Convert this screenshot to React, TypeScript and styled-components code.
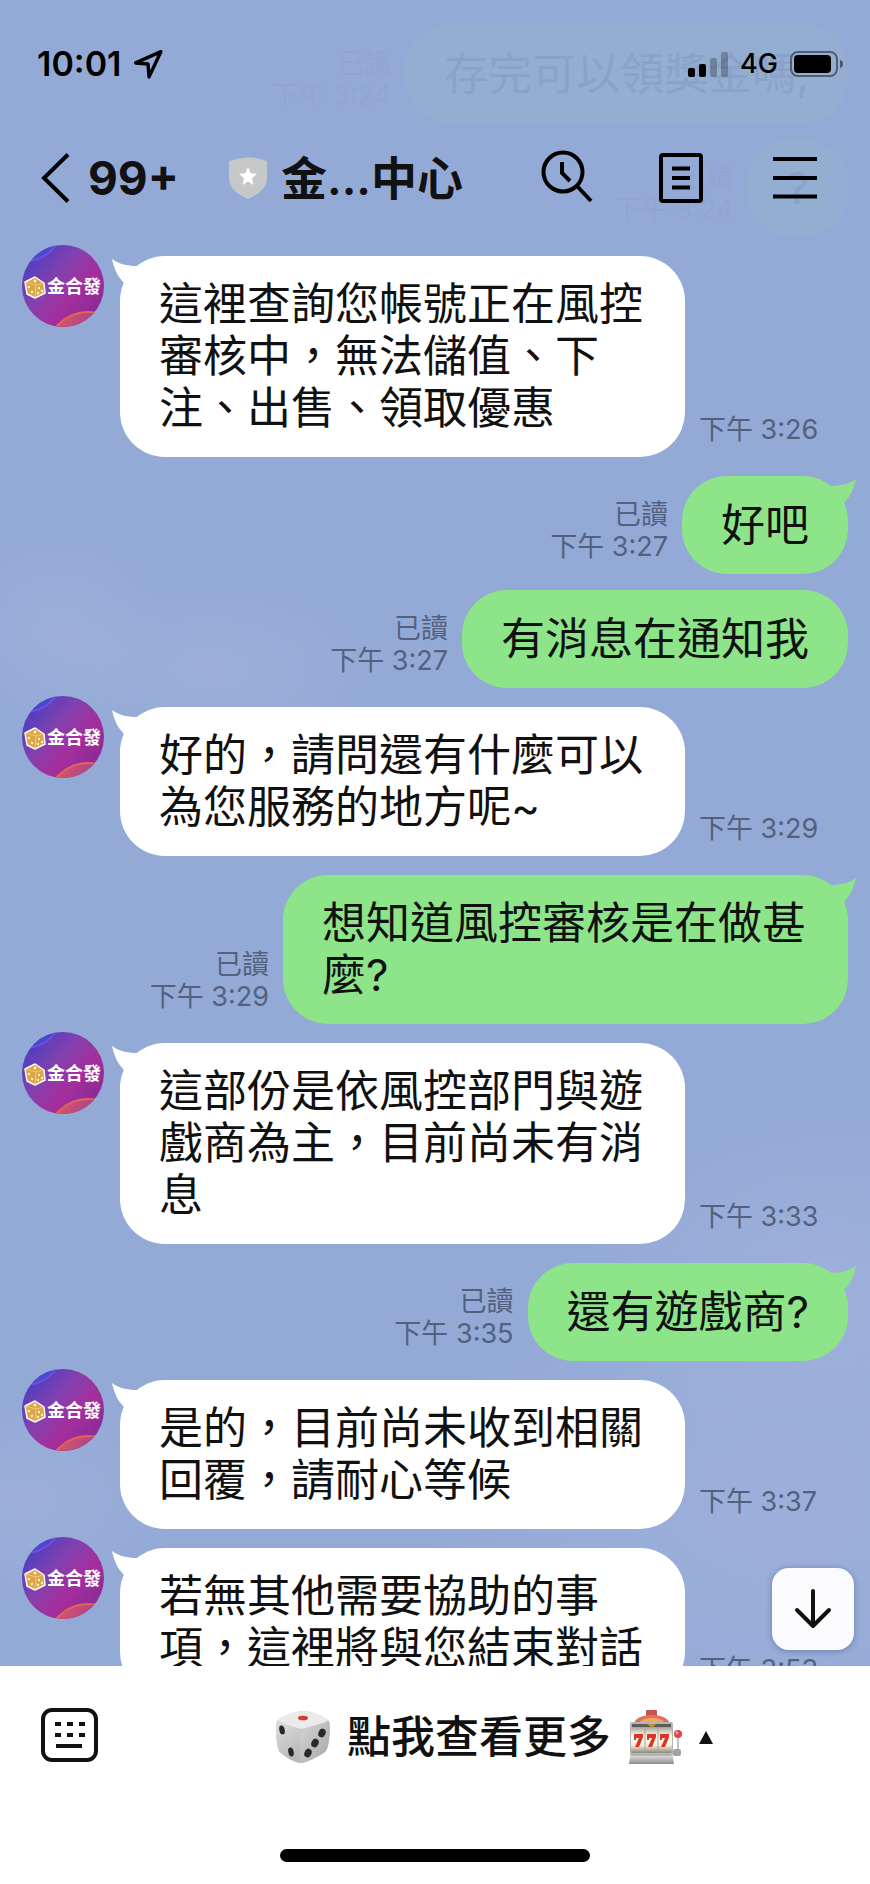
import React from 'react';
import styled, { createGlobalStyle } from 'styled-components';

const GlobalStyle = createGlobalStyle`
  * { box-sizing: border-box; }
  body {
    margin: 0;
    background: #fff;
    color: #111;
    font-family: Inter, "Noto Sans CJK TC", sans-serif;
  }
  button {
    margin: 0;
    padding: 0;
    border: 0;
    background: none;
    color: inherit;
    font: inherit;
    cursor: pointer;
  }
  svg { display: block; flex: none; }
`;

const Screen = styled.div`
  display: flex;
  flex-direction: column;
  height: 100vh;
`;

const Chat = styled.main`
  position: relative;
  flex: 1;
  min-height: 0;
  overflow: hidden;
  background:
    radial-gradient(ellipse 110px 100px at 60px 630px, rgba(166, 182, 224, 0.4), transparent),
    radial-gradient(ellipse 170px 90px at 210px 670px, rgba(166, 182, 224, 0.4), transparent),
    radial-gradient(ellipse 260px 180px at 96% 1290px, rgba(166, 182, 224, 0.5), transparent),
    radial-gradient(ellipse 360px 260px at 90% 1500px, rgba(166, 182, 224, 0.45), transparent),
    radial-gradient(ellipse 160px 100px at 20px 1500px, rgba(166, 182, 224, 0.4), transparent),
    #94aad6;
`;

/* Header */

const Header = styled.header`
  position: absolute;
  inset: 0 0 auto;
  z-index: 1;
  background: rgba(148, 170, 214, 0.94);
`;

const StatusBar = styled.div`
  display: flex;
  align-items: center;
  justify-content: space-between;
  height: 118px;
  padding: 10px 26px 0 37px;
  color: #000;
`;

const StatusGroup = styled.div`
  display: flex;
  align-items: center;
  gap: 12px;
`;

const Clock = styled.span`
  font-size: 34px;
  font-weight: 600;
  line-height: 40px;
`;

const Network = styled.span`
  font-size: 27px;
  font-weight: 500;
  line-height: 32px;
`;

const NavBar = styled.nav`
  display: flex;
  align-items: center;
  height: 120px;
  padding: 0 47px 0 40px;
`;

const BackButton = styled.button`
  display: flex;
  align-items: center;
  gap: 18px;
  min-width: 189px;
  font-size: 46px;
  font-weight: 700;
  line-height: 52px;
`;

const Title = styled.h1`
  display: flex;
  flex: 1;
  align-items: center;
  gap: 14px;
  margin: 0;
  font-size: 46px;
  font-weight: 600;
  line-height: 52px;
  white-space: nowrap;
`;

const NavActions = styled.div`
  display: flex;
  gap: 58px;
`;

/* Messages */

const Thread = styled.ol`
  display: flex;
  flex-direction: column;
  margin: 0;
  padding: 25px 22px 0;
  list-style: none;
`;

const Message = styled.li<{ $mine: boolean; $grouped: boolean }>`
  display: flex;
  flex-direction: ${(p) => (p.$mine ? 'row-reverse' : 'row')};
  align-items: flex-end;
  gap: 14px;
  margin-top: ${(p) => (p.$grouped ? 16 : p.$mine ? 19 : 8)}px;

  &:first-child { margin-top: 0; }
`;

const Avatar = styled.svg`
  align-self: flex-start;
  margin-right: 2px;
`;

const Bubble = styled.div<{ $mine: boolean }>`
  position: relative;
  display: flex;
  align-items: center;
  justify-content: center;
  max-width: 565px;
  min-width: 98px;
  min-height: 98px;
  margin-top: ${(p) => (p.$mine ? 0 : 11)}px;
  padding: 22px 39px 23px;
  border-radius: 45px;
  background: ${(p) => (p.$mine ? '#8de489' : '#fff')};
  font-size: 44px;
  line-height: 52px;
`;

const Tail = styled.svg<{ $mine: boolean }>`
  position: absolute;
  top: 3px;
  ${(p) => (p.$mine ? 'right: -8px; transform: scaleX(-1);' : 'left: -8px;')}
  fill: ${(p) => (p.$mine ? '#8de489' : '#fff')};
`;

const Stamp = styled.div<{ $mine: boolean }>`
  display: flex;
  flex-direction: column;
  margin-bottom: 11px;
  color: #53617f;
  font-size: 27px;
  line-height: 32px;
  text-align: ${(p) => (p.$mine ? 'right' : 'left')};
  white-space: nowrap;
`;

const ScrollButton = styled.button`
  position: absolute;
  right: 16px;
  bottom: 16px;
  display: grid;
  place-items: center;
  width: 82px;
  height: 82px;
  border-radius: 17px;
  background: #fbfbfe;
  box-shadow: 0 1px 6px rgba(40, 60, 110, 0.4);
`;

/* Footer */

const Footer = styled.footer`
  display: flex;
  flex-direction: column;
  align-items: center;
  padding-bottom: 22px;
  background: #fff;
`;

const MenuBar = styled.div`
  display: flex;
  align-items: center;
  width: 100%;
  height: 138px;
  margin-bottom: 45px;
`;

const KeyboardButton = styled.button`
  width: 118px;
  padding-left: 40px;
`;

const MenuButton = styled.button`
  display: flex;
  flex: 1;
  align-items: center;
  justify-content: center;
  gap: 16px;
  padding-top: 4px;
  font-size: 44px;
  font-weight: 500;
  line-height: 52px;
`;

const HomeIndicator = styled.div`
  width: 310px;
  height: 13px;
  border-radius: 7px;
  background: #000;
`;

type Entry = { from: 'me' | 'them'; text: string; time: string; tail?: boolean };

const entries: Entry[] = [
  { from: 'me', text: '存完可以領獎金嗎,', time: '下午 3:24' },
  { from: 'me', text: '?', time: '下午 3:24' },
  { from: 'them', text: '這裡查詢您帳號正在風控審核中，無法儲值、下注、出售、領取優惠', time: '下午 3:26', tail: true },
  { from: 'me', text: '好吧', time: '下午 3:27', tail: true },
  { from: 'me', text: '有消息在通知我', time: '下午 3:27' },
  { from: 'them', text: '好的，請問還有什麼可以為您服務的地方呢~', time: '下午 3:29', tail: true },
  { from: 'me', text: '想知道風控審核是在做甚麼?', time: '下午 3:29', tail: true },
  { from: 'them', text: '這部份是依風控部門與遊戲商為主，目前尚未有消息', time: '下午 3:33', tail: true },
  { from: 'me', text: '還有遊戲商?', time: '下午 3:35', tail: true },
  { from: 'them', text: '是的，目前尚未收到相關回覆，請耐心等候', time: '下午 3:37', tail: true },
  { from: 'them', text: '若無其他需要協助的事項，這裡將與您結束對話', time: '下午 3:53', tail: true },
];

function BrandAvatar({ id }: { id: string }) {
  return (
    <Avatar width="82" height="82" viewBox="0 0 82 82" role="img" aria-label="金合發">
      <defs>
        <linearGradient id={`${id}-bg`} x1="0.1" y1="0.1" x2="0.9" y2="0.8">
          <stop offset="0" stopColor="#4a3fc0" />
          <stop offset="0.4" stopColor="#8440ae" />
          <stop offset="0.7" stopColor="#a42e9c" />
          <stop offset="1" stopColor="#8a2c96" />
        </linearGradient>
        <linearGradient id={`${id}-glow`} x1="0" y1="0" x2="1" y2="0.4">
          <stop offset="0" stopColor="#e0605c" />
          <stop offset="0.6" stopColor="#a83c92" />
        </linearGradient>
        <clipPath id={`${id}-clip`}>
          <circle cx="41" cy="41" r="41" />
        </clipPath>
      </defs>
      <g clipPath={`url(#${id}-clip)`}>
        <rect width="82" height="82" fill={`url(#${id}-bg)`} />
        <circle cx="3" cy="-22" r="38" fill="#4a48d0" stroke="#7050e0" strokeWidth="2" />
        <circle cx="66" cy="108" r="41" fill={`url(#${id}-glow)`} stroke="#e8605a" strokeWidth="2" />
      </g>
      <g stroke="#fff" strokeWidth="1.5" strokeLinejoin="round">
        <path d="M3 37 L13 32 L22 38 L23 48 L13 53 L5 49Z" fill="#dba548" />
        <path d="M3 37 L14 40 L22 38 M14 40 L13 53" fill="none" stroke="#f0cb78" strokeWidth="1" />
      </g>
      <g fill="#fff3d0">
        <circle cx="13" cy="36" r="1.5" />
        <circle cx="7" cy="42" r="1.2" />
        <circle cx="10" cy="47" r="1.2" />
        <circle cx="17" cy="43" r="1.2" />
        <circle cx="20" cy="46" r="1.2" />
        <circle cx="16" cy="48" r="1.2" />
      </g>
      <text x="25" y="48" fontSize="18" fontWeight="700" fill="#fff">金合發</text>
    </Avatar>
  );
}

function DiceIcon() {
  return (
    <svg width="56" height="56" viewBox="0 0 56 56" aria-hidden="true">
      <defs>
        <linearGradient id="dice-left" x1="0" y1="0" x2="0.4" y2="1">
          <stop offset="0" stopColor="#dedede" />
          <stop offset="1" stopColor="#b9b9bb" />
        </linearGradient>
        <linearGradient id="dice-right" x1="0" y1="0" x2="1" y2="1">
          <stop offset="0" stopColor="#d6d6d8" />
          <stop offset="1" stopColor="#a6a6a9" />
        </linearGradient>
      </defs>
      <path d="M2 12 C5 8 22 2 28 2 C34 2 50 7 54 12 C56 20 54 38 51 42 C47 46 31 54 26 54 C20 54 8 47 4 42 C1 34 0 18 2 12Z" fill="#cacacc" />
      <path d="M2 12 C8 14 20 17 23 21 C26 27 25 46 26 54 C20 54 8 47 4 42 C1 34 0 18 2 12Z" fill="url(#dice-left)" />
      <path d="M54 12 C48 14 31 17 27 22 C25 30 25 46 26 54 C31 54 47 46 51 42 C54 38 56 20 54 12Z" fill="url(#dice-right)" />
      <path d="M3 11 C7 7 22 2 28 2 C34 2 50 7 53 11 C52 14 32 18 26 20 C20 18 4 14 3 11Z" fill="#ebebeb" />
      <ellipse cx="28" cy="9" rx="5" ry="2.3" fill="#d93a30" />
      <g fill="#292929">
        <ellipse cx="7" cy="21" rx="2.7" ry="4.5" transform="rotate(-12 7 21)" />
        <ellipse cx="16" cy="43" rx="2.7" ry="4.5" transform="rotate(-12 16 43)" />
        <ellipse cx="47" cy="24" rx="3.5" ry="4.5" transform="rotate(25 47 24)" />
        <ellipse cx="40" cy="34" rx="3.5" ry="4.5" transform="rotate(25 40 34)" />
        <ellipse cx="33" cy="44" rx="3.5" ry="4.5" transform="rotate(25 33 44)" />
      </g>
    </svg>
  );
}

function SlotMachineIcon() {
  return (
    <svg width="56" height="56" viewBox="0 0 56 56" aria-hidden="true">
      <defs>
        <linearGradient id="slot-reel" x1="0" y1="0" x2="0" y2="1">
          <stop offset="0" stopColor="#a9a395" />
          <stop offset="0.35" stopColor="#fffdf4" />
          <stop offset="0.7" stopColor="#f4efdf" />
          <stop offset="1" stopColor="#8f897c" />
        </linearGradient>
        <linearGradient id="slot-base" x1="0" y1="0" x2="0" y2="1">
          <stop offset="0" stopColor="#d9d9d9" />
          <stop offset="1" stopColor="#8c8e8e" />
        </linearGradient>
      </defs>
      <rect x="19" y="1" width="11" height="7" rx="1" fill="#c8544b" />
      <path d="M7 14 C9 8 18 6 25 6 C32 6 40 8 43 14Z" fill="#dc705c" />
      <path d="M12 14 C14 10 20 9 25 9 C30 9 36 10 38 14Z" fill="#f2a75e" />
      <rect x="3" y="13" width="43" height="34" rx="2" fill="#b5b6b3" />
      <rect x="5" y="15" width="39" height="3" fill="#5c5d58" />
      <rect x="4" y="18" width="41" height="26" rx="2" fill="url(#slot-reel)" />
      <path d="M18 18V44M31 18V44" stroke="#aaa38f" strokeWidth="1" />
      <path d="M20 15h9l-4 4z" fill="#b99739" />
      <path d="M7 25h9v3l-4 10h-4l4-9h-3v2h-2zM20 25h9v3l-4 10h-4l4-9h-3v2h-2zM33 25h9v3l-4 10h-4l4-9h-3v2h-2z" fill="#dd3224" />
      <path d="M3 47h43l1 8H2z" fill="url(#slot-base)" />
      <path d="M51 27V42" stroke="#bfc3c4" strokeWidth="2" />
      <rect x="46" y="40" width="8" height="7" rx="2" fill="#9ea2a4" />
      <circle cx="51" cy="25" r="4" fill="#e2444a" />
      <circle cx="50" cy="24" r="1.4" fill="#f6a3a3" />
    </svg>
  );
}

function ChatHeader() {
  return (
    <Header>
      <StatusBar>
        <StatusGroup>
          <Clock>10:01</Clock>
          <svg width="30" height="30" viewBox="0 0 28 28" fill="none" stroke="currentColor" strokeWidth="3.2" strokeLinejoin="round" aria-label="定位">
            <path d="M2.5 13 L26 2.500 L15 26 L14 14Z" />
          </svg>
        </StatusGroup>
        <StatusGroup>
          <svg width="40" height="26" viewBox="0 0 40 26" fill="currentColor" aria-label="訊號">
            <rect x="0" y="17" width="7" height="9" rx="2" />
            <rect x="11" y="13" width="7" height="13" rx="2" />
            <rect x="22" y="7" width="7" height="19" rx="2" opacity="0.25" />
            <rect x="33" y="1" width="7" height="25" rx="2" opacity="0.25" />
          </svg>
          <Network>4G</Network>
          <svg width="54" height="26" viewBox="0 0 54 26" aria-label="電池">
            <rect x="1" y="1" width="46" height="24" rx="7" fill="none" stroke="#000" strokeOpacity="0.45" strokeWidth="2" />
            <rect x="4" y="4" width="37" height="18" rx="4" />
            <path d="M50 9 C54 10 54 16 50 17Z" fill="#000" fillOpacity="0.5" />
          </svg>
        </StatusGroup>
      </StatusBar>
      <NavBar>
        <BackButton type="button">
          <svg width="30" height="50" viewBox="0 0 30 50" fill="none" stroke="#000" strokeWidth="4" aria-hidden="true">
            <path d="M28 1.500 L4 25 L28 48.500" />
          </svg>
          99+
        </BackButton>
        <Title>
          <svg width="38" height="44" viewBox="0 0 38 44" aria-hidden="true">
            <path d="M0 5 Q19 -2 38 5 V22 C38 33 28 39 19 43 C10 39 0 33 0 22Z" fill="#c6c7c9" />
            <path d="M19 11 L21.600 17.200 L28 17.800 L23 22.200 L24.500 29 L19 25.500 L13.500 29 L15 22.200 L10 17.800 L16.400 17.200Z" fill="#fff" />
          </svg>
          金...中心
        </Title>
        <NavActions>
          <button type="button" aria-label="搜尋">
            <svg width="56" height="56" viewBox="0 0 56 56" fill="none" stroke="#000" strokeWidth="4" aria-hidden="true">
              <circle cx="24" cy="22" r="19.500" />
              <path d="M38 36 L52 51 M23 12 V23 L31 31" />
            </svg>
          </button>
          <button type="button" aria-label="記事本">
            <svg width="56" height="56" viewBox="0 0 56 56" fill="none" stroke="#000" strokeWidth="4" aria-hidden="true">
              <rect x="8" y="5" width="40" height="46" rx="2" />
              <path d="M19 18.500H37 M19 28H37 M19 37.500H37" />
            </svg>
          </button>
          <button type="button" aria-label="選單">
            <svg width="56" height="56" viewBox="0 0 56 56" fill="none" stroke="#000" strokeWidth="4" aria-hidden="true">
              <path d="M6 9H50 M6 28H50 M6 46.500H50" />
            </svg>
          </button>
        </NavActions>
      </NavBar>
    </Header>
  );
}

export default function App() {
  return (
    <Screen>
      <GlobalStyle />
      <Chat>
        <ChatHeader />
        <Thread>
          {entries.map((entry, i) => {
            const mine = entry.from === 'me';
            return (
              <Message key={i} $mine={mine} $grouped={mine && entries[i - 1]?.from === 'me'}>
                {!mine && <BrandAvatar id={`avatar-${i}`} />}
                <Bubble $mine={mine}>
                  {entry.tail && (
                    <Tail $mine={mine} width="40" height="32" viewBox="0 0 40 32" aria-hidden="true">
                      <path d="M0 0 C7 5 15 7 25 7 L40 12 L20 32 L12 24 C5 17 2 9 0 0Z" />
                    </Tail>
                  )}
                  <span>{entry.text}</span>
                </Bubble>
                <Stamp $mine={mine}>
                  {mine && <span>已讀</span>}
                  <time>{entry.time}</time>
                </Stamp>
              </Message>
            );
          })}
        </Thread>
        <ScrollButton type="button" aria-label="捲到最新訊息">
          <svg width="40" height="42" viewBox="0 0 40 42" fill="none" stroke="#111" strokeWidth="4" strokeLinecap="round" strokeLinejoin="round" aria-hidden="true">
            <path d="M20 3 V38 M4 22 L20 38 L36 22" />
          </svg>
        </ScrollButton>
      </Chat>
      <Footer>
        <MenuBar>
          <KeyboardButton type="button" aria-label="鍵盤">
            <svg width="58" height="56" viewBox="0 0 58 56" fill="none" stroke="#111" strokeWidth="4" aria-hidden="true">
              <rect x="3" y="3" width="53" height="50" rx="9" />
              <path d="M15 17h6M27 17h6M39 17h6M15 28h6M27 28h6M39 28h6M16 39h26" />
            </svg>
          </KeyboardButton>
          <MenuButton type="button">
            <DiceIcon />
            點我查看更多
            <SlotMachineIcon />
            <svg width="14" height="13" viewBox="0 0 14 13" fill="#111" aria-hidden="true">
              <path d="M7 0 L14 13 H0Z" />
            </svg>
          </MenuButton>
        </MenuBar>
        <HomeIndicator />
      </Footer>
    </Screen>
  );
}
